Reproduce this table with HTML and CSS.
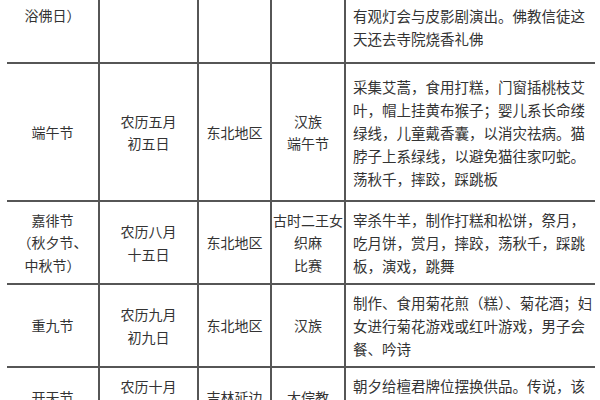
FILE: index.html
```html
<!DOCTYPE html>
<html lang="zh-CN">
<head>
<meta charset="utf-8">
<title>节日习俗表</title>
<link rel="stylesheet" href="styles.css">
</head>
<body>
<table class="sheet">
  <colgroup>
    <col class="c-name">
    <col class="c-date">
    <col class="c-area">
    <col class="c-group">
    <col class="c-desc">
  </colgroup>
  <tbody>
    <tr class="r-top">
      <td>浴佛日）</td>
      <td></td>
      <td></td>
      <td></td>
      <td class="desc">有观灯会与皮影剧演出。佛教信徒这<br>天还去寺院烧香礼佛</td>
    </tr>
    <tr class="r-tall">
      <td>端午节</td>
      <td>农历五月<br>初五日</td>
      <td>东北地区</td>
      <td>汉族<br>端午节</td>
      <td class="desc">采集艾蒿，食用打糕，门窗插桃枝艾<br>叶，帽上挂黄布猴子；婴儿系长命缕<br>绿线，儿童戴香囊，以消灾祛病。猫<br>脖子上系绿线，以避免猫往家叼蛇。<br>荡秋千，摔跤，踩跳板</td>
    </tr>
    <tr class="r-mid">
      <td>嘉徘节<br>（秋夕节、<br>中秋节）</td>
      <td>农历八月<br>十五日</td>
      <td>东北地区</td>
      <td>古时二王女<br>织麻<br>比赛</td>
      <td class="desc">宰杀牛羊，制作打糕和松饼，祭月，<br>吃月饼，赏月，摔跤，荡秋千，踩跳<br>板，演戏，跳舞</td>
    </tr>
    <tr class="r-mid">
      <td>重九节</td>
      <td>农历九月<br>初九日</td>
      <td>东北地区</td>
      <td>汉族</td>
      <td class="desc">制作、食用菊花煎（糕）、菊花酒；妇<br>女进行菊花游戏或红叶游戏，男子会<br>餐、吟诗</td>
    </tr>
    <tr class="r-last">
      <td>开天节</td>
      <td>农历十月<br>初三日</td>
      <td>吉林延边</td>
      <td>大倧教</td>
      <td class="desc">朝夕给檀君牌位摆换供品。传说，该<br>日是檀君降临人间开国的日子</td>
    </tr>
  </tbody>
</table>
</body>
</html>
```

FILE: styles.css
```css
html, body {
  margin: 0;
  padding: 0;
  background: #ffffff;
  overflow: hidden;
}

body {
  width: 600px;
  height: 400px;
  font-family: "Noto Sans CJK SC", "Noto Sans", sans-serif;
  color: #333333;
}

.sheet {
  width: 588px;
  margin: 0 0 0 7px;
  border-collapse: collapse;
  table-layout: fixed;
}

.c-name { width: 92px; }
.c-date { width: 99px; }
.c-area { width: 73px; }
.c-group { width: 74px; }
.c-desc { width: 250px; }

.sheet td {
  padding: 0;
  border-left: 2px solid #565656;
  border-bottom: 2px solid #565656;
  text-align: center;
  vertical-align: middle;
  font-size: 14px;
  line-height: 22.5px;
  white-space: nowrap;
}

.sheet td:first-child {
  border-left: none;
}

.sheet td.desc {
  text-align: left;
  padding: 0 6px 0 7px;
  font-size: 14.5px;
  line-height: 23px;
}

.sheet .r-top td {
  vertical-align: top;
  padding-top: 4px;
}

.r-top { height: 63px; }
.r-tall { height: 138px; }
.r-mid { height: 83px; }
.r-last { height: 60px; }
```
